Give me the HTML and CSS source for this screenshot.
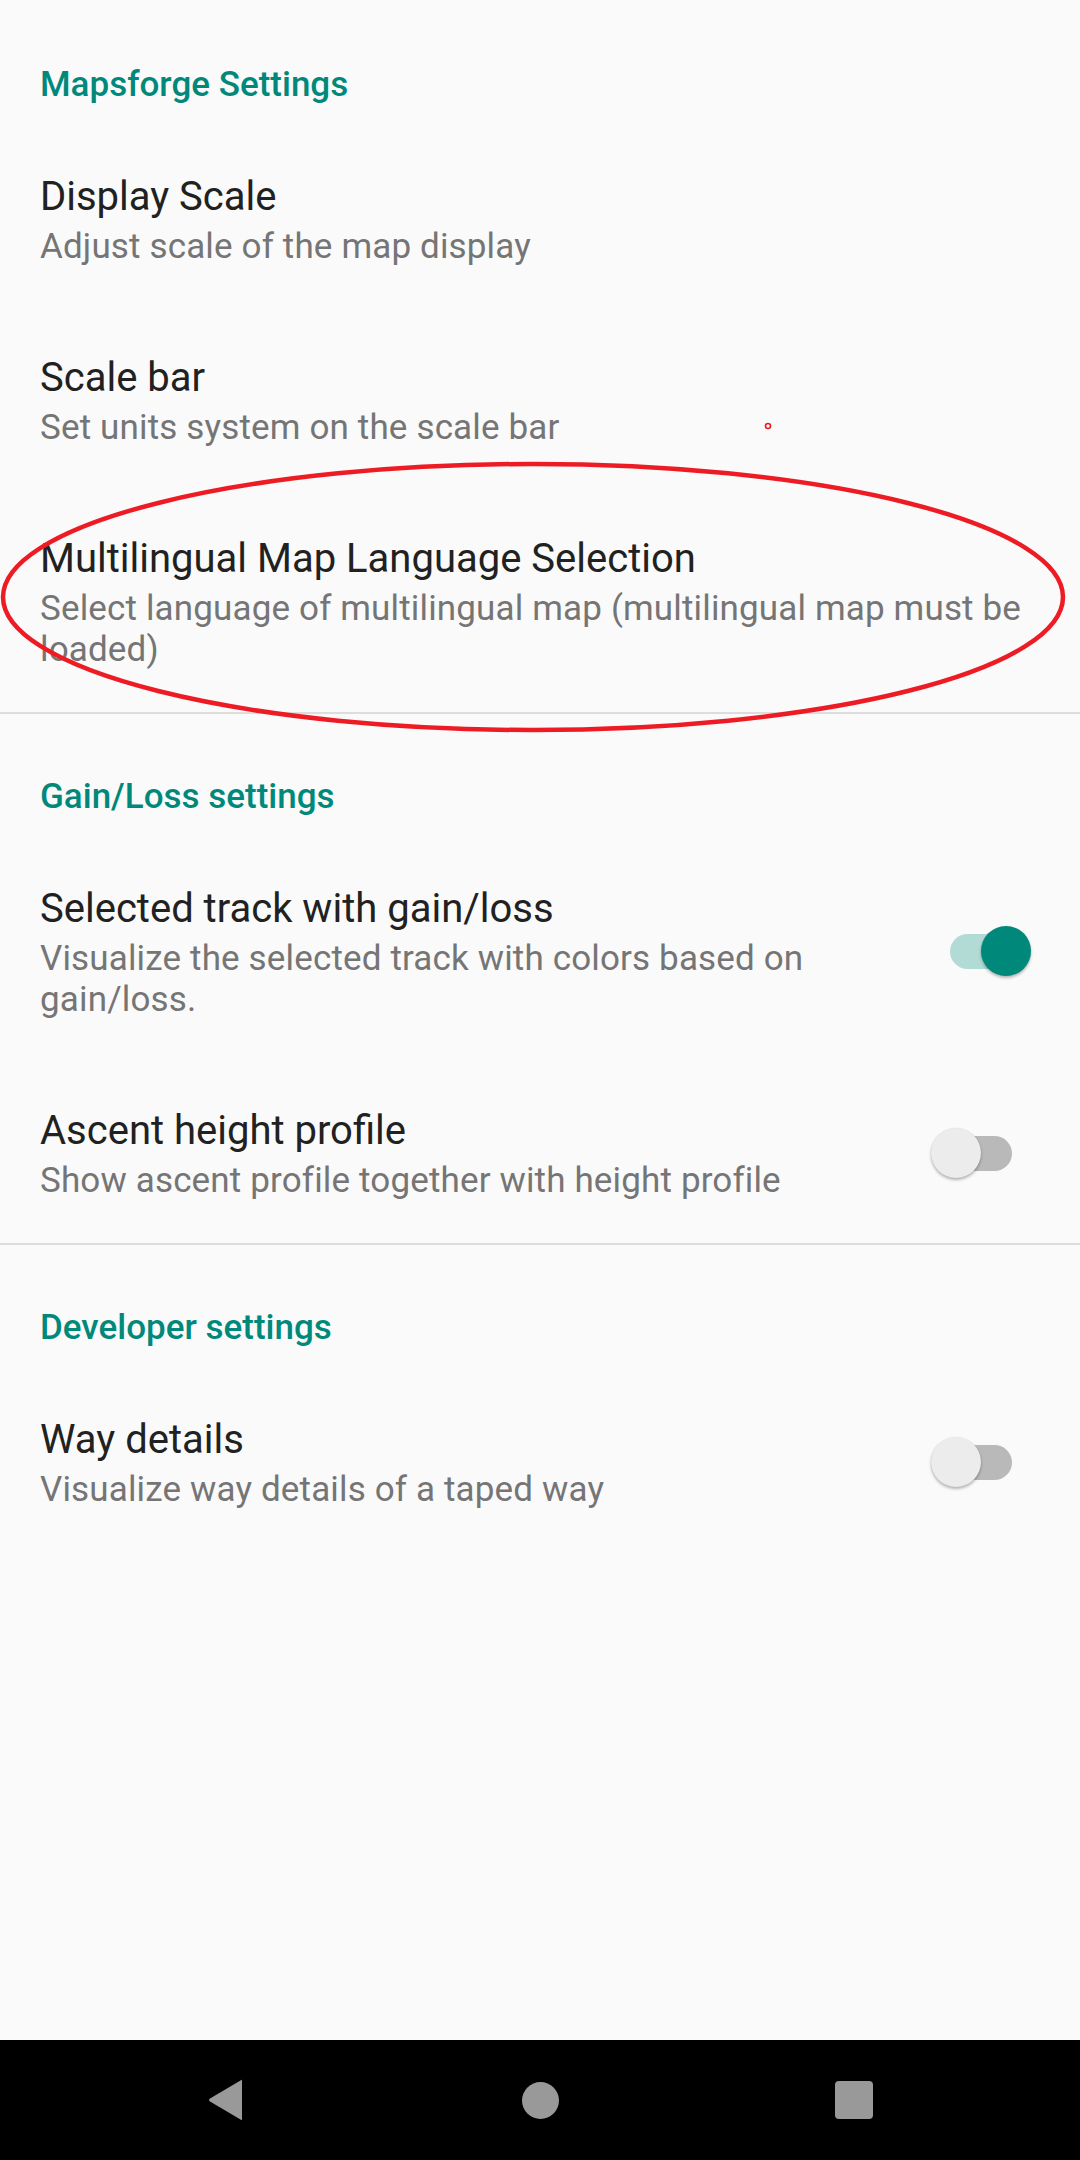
FILE: index.html
```html
<!DOCTYPE html>
<html lang="en">
<head>
<meta charset="utf-8">
<title>Settings</title>
<link rel="stylesheet" href="styles.css">
</head>
<body>
<div class="screen">
  <main class="prefs">
    <section class="category category-first">
      <h2 class="cat-title">Mapsforge Settings</h2>
    </section>
    <div class="item">
      <div class="texts">
        <div class="title">Display Scale</div>
        <div class="summary">Adjust scale of the map display</div>
      </div>
    </div>
    <div class="item">
      <div class="texts">
        <div class="title">Scale bar</div>
        <div class="summary">Set units system on the scale bar</div>
      </div>
    </div>
    <div class="item">
      <div class="texts">
        <div class="title">Multilingual Map Language Selection</div>
        <div class="summary">Select language of multilingual map (multilingual map must be loaded)</div>
      </div>
    </div>
    <div class="divider"></div>

    <section class="category">
      <h2 class="cat-title">Gain/Loss settings</h2>
    </section>
    <div class="item">
      <div class="texts">
        <div class="title">Selected track with gain/loss</div>
        <div class="summary">Visualize the selected track with colors based on gain/loss.</div>
      </div>
      <div class="switch on"><span class="track"></span><span class="thumb"></span></div>
    </div>
    <div class="item">
      <div class="texts">
        <div class="title">Ascent height profile</div>
        <div class="summary">Show ascent profile together with height profile</div>
      </div>
      <div class="switch"><span class="track"></span><span class="thumb"></span></div>
    </div>
    <div class="divider"></div>

    <section class="category">
      <h2 class="cat-title">Developer settings</h2>
    </section>
    <div class="item">
      <div class="texts">
        <div class="title">Way details</div>
        <div class="summary">Visualize way details of a taped way</div>
      </div>
      <div class="switch"><span class="track"></span><span class="thumb"></span></div>
    </div>
  </main>

  <nav class="navbar">
    <div class="nav-btn">
      <svg width="40" height="44" viewBox="0 0 40 44"><path d="M36 3 L36 41 Q36 43 34.5 41.5 L4 23.5 Q2 22 4 20.5 L34.5 2.5 Q36 1 36 3 Z" fill="#999999"/></svg>
    </div>
    <div class="nav-btn">
      <span class="home"></span>
    </div>
    <div class="nav-btn">
      <span class="recents"></span>
    </div>
  </nav>

  <svg class="annotation" width="1080" height="2160" viewBox="0 0 1080 2160">
    <ellipse cx="533" cy="597" rx="530" ry="133" fill="none" stroke="#ed1c24" stroke-width="4.5"/>
    <circle cx="768" cy="426" r="2.5" fill="none" stroke="#ed1c24" stroke-width="1.6"/>
  </svg>
</div>
</body>
</html>
```

FILE: styles.css
```css
* { box-sizing: border-box; }

html, body {
  margin: 0;
  padding: 0;
  background: #fafafa;
}

body {
  font-family: Roboto, "Noto Sans", "Liberation Sans", sans-serif;
}

.screen {
  position: relative;
  width: 1080px;
  height: 2160px;
  display: flex;
  flex-direction: column;
  background: #fafafa;
  overflow: hidden;
}

.prefs {
  flex: 1;
  display: flex;
  flex-direction: column;
}

.category {
  padding: 62px 40px 23px;
}

.category-first {
  padding-top: 64px;
}

.cat-title {
  margin: 0;
  font-size: 35px;
  line-height: 41px;
  font-weight: 500;
  color: #00897b;
}

.item {
  display: flex;
  align-items: center;
  padding: 0 49px 0 40px;
}

.texts {
  flex: 1;
  padding: 45px 0 42px;
  min-width: 0;
}

.title {
  font-size: 40px;
  line-height: 47px;
  color: #212121;
}

.summary {
  margin-top: 6px;
  font-size: 35px;
  line-height: 41px;
  letter-spacing: 0.15px;
  color: #757575;
}

.divider {
  height: 2px;
  background: #dddddd;
}

.switch {
  position: relative;
  flex: none;
  width: 100px;
  height: 50px;
  margin-left: 40px;
}

.switch .track {
  position: absolute;
  left: 19px;
  top: 8px;
  width: 62px;
  height: 35px;
  border-radius: 17.5px;
  background: #b9b9b9;
}

.switch .thumb {
  position: absolute;
  left: 0;
  top: 0;
  width: 50px;
  height: 50px;
  border-radius: 50%;
  background: #ececec;
  box-shadow: 0 2px 3px rgba(0, 0, 0, 0.28), 0 0 1px rgba(0, 0, 0, 0.12);
}

.switch.on .track {
  background: #b2dbd6;
}

.switch.on .thumb {
  left: 50px;
  background: #00897b;
}

.navbar {
  flex: none;
  height: 120px;
  background: #000000;
  display: flex;
  align-items: center;
  justify-content: center;
  gap: 234px;
}

.nav-btn {
  width: 80px;
  height: 80px;
  display: flex;
  align-items: center;
  justify-content: center;
}

.home {
  width: 37px;
  height: 37px;
  border-radius: 50%;
  background: #999999;
}

.recents {
  width: 38px;
  height: 38px;
  border-radius: 4px;
  background: #999999;
}

.annotation {
  position: absolute;
  left: 0;
  top: 0;
  pointer-events: none;
}
```
